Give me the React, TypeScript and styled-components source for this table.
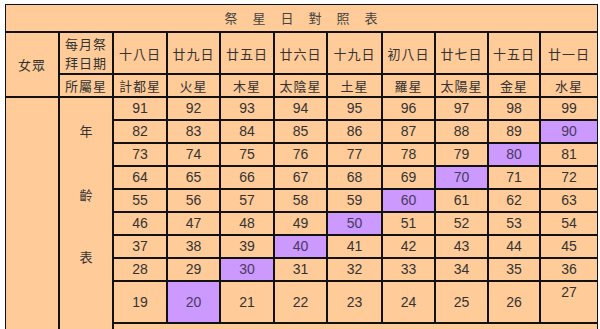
import * as React from 'react';
import styled, { createGlobalStyle } from 'styled-components';

const GlobalStyle = createGlobalStyle`
	html, body {
		background: #ffffff;
	}
	body {
		margin: 4px 0 0 5px;
		font-family: "Liberation Sans", "Noto Sans CJK TC", Arial, sans-serif;
		overflow: hidden;
	}
`;

const Table = styled.table`
	width: 593px;
	table-layout: fixed;
	border-collapse: separate;
	border-spacing: 0;
	background: #ffcc99;
	color: #333333;
	font-size: 13px;
`;

const Cell = styled.td<{ $purple?: boolean }>`
	border: 1px solid #111111;
	padding: 1px 0;
	line-height: 19px;
	text-align: center;
	vertical-align: middle;
	background: ${props => (props.$purple ? '#cc99ff' : '#ffcc99')};
	color: ${props => (props.$purple ? '#4a3a5e' : '#333333')};
`;

const TitleCell = styled(Cell)`
	line-height: 24px;
	color: #444444;
	letter-spacing: 1px;
	font-family: "Noto Sans CJK TC", sans-serif;
	font-size: 13px;
`;

const HeadCell = styled(Cell)`
	font-family: "Noto Sans CJK TC", sans-serif;
	font-size: 13px;
	letter-spacing: 1px;
`;

const NumCell = styled(Cell)`
	font-family: "Liberation Sans", Arial, sans-serif;
	font-size: 14px;
`;

const SideCell = styled(Cell)`
	vertical-align: top;
	padding-top: 22px;
	font-family: "Noto Sans CJK TC", sans-serif;
	line-height: 21px;
`;

const Char = styled.div<{ $gap: number }>`
	height: 21px;
	margin-bottom: ${props => props.$gap}px;
`;

const widths = [54, 54, 54, 53, 54, 53, 55, 53, 53, 52, 58];
const days = ['十八日', '廿九日', '廿五日', '廿六日', '十九日', '初八日', '廿七日', '十五日', '廿一日'];
const stars = ['計都星', '火星', '木星', '太陰星', '土星', '羅星', '太陽星', '金星', '水星'];

export default function App() {
	const rows = Array.from({ length: 9 }, (_, r) => Array.from({ length: 9 }, (_, c) => 91 - 9 * r + c));
	return (
		<>
			<GlobalStyle />
			<Table>
				<colgroup>
					{widths.map((w, i) => (
						<col key={i} style={{ width: w }} />
					))}
				</colgroup>
				<tbody>
					<tr>
						<TitleCell colSpan={11}>祭　星　日　對　照　表</TitleCell>
					</tr>
					<tr>
						<HeadCell rowSpan={2}>女眾</HeadCell>
						<HeadCell>每月祭<br />拜日期</HeadCell>
						{days.map(d => (
							<HeadCell key={d}>{d}</HeadCell>
						))}
					</tr>
					<tr>
						<HeadCell>所屬星</HeadCell>
						{stars.map(s => (
							<HeadCell key={s}>{s}</HeadCell>
						))}
					</tr>
					{rows.map((row, r) => (
						<tr key={r}>
							{r === 0 && (
								<>
									<SideCell rowSpan={10}>&nbsp;</SideCell>
									<SideCell rowSpan={10}>
										<Char $gap={43}>年</Char>
										<Char $gap={41}>齡</Char>
										<Char $gap={0}>表</Char>
									</SideCell>
								</>
							)}
							{row.map(n => (
								<NumCell key={n} $purple={n % 10 === 0}>
									{n === 27 ? (
										<>
											27
											<br />
											&nbsp;
										</>
									) : (
										n
									)}
								</NumCell>
							))}
						</tr>
					))}
					<tr>
						<NumCell colSpan={9}>&nbsp;</NumCell>
					</tr>
				</tbody>
			</Table>
		</>
	);
}
